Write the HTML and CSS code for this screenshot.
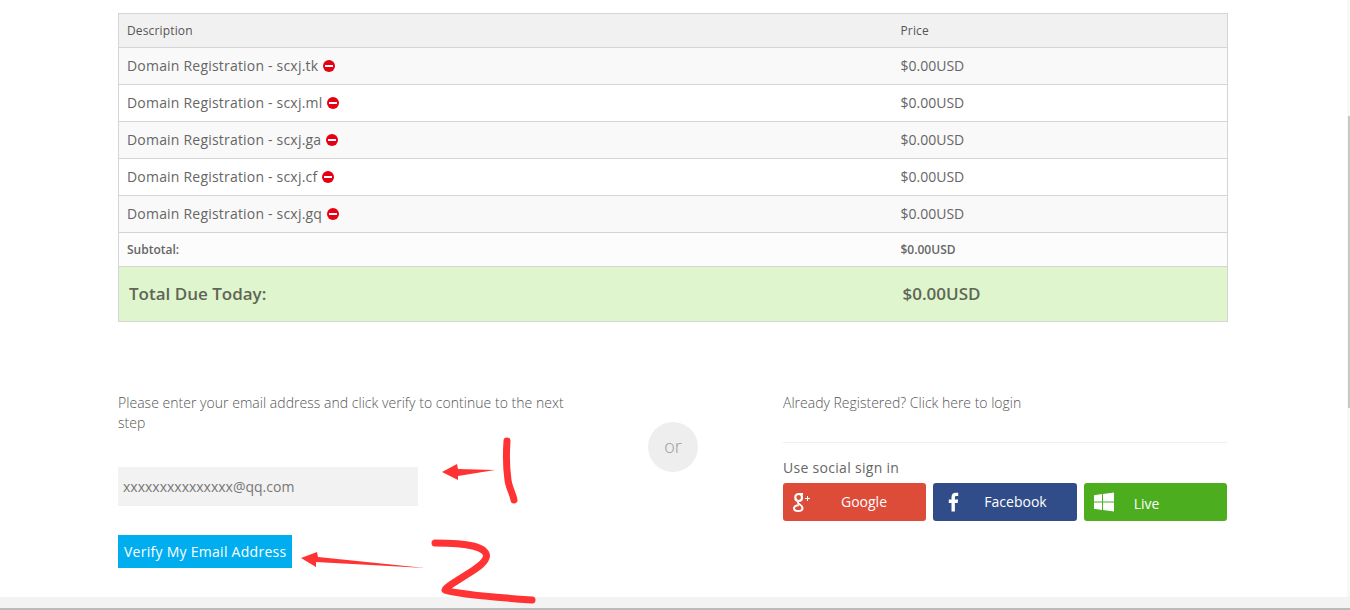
FILE: index.html
```html
<!DOCTYPE html>
<html lang="en">
<head>
    <meta charset="UTF-8">
    <meta name="viewport" content="width=device-width, initial-scale=1.0">
    <title>Checkout</title>
    <link rel="stylesheet" href="styles.css">
</head>
<body>
    <div class="page">
        <table class="cart">
            <tr class="head">
                <th class="col-desc">Description</th>
                <th>Price</th>
            </tr>
            <tr class="item odd">
                <td>Domain Registration - scxj.tk <span class="remove"></span></td>
                <td>$0.00USD</td>
            </tr>
            <tr class="item">
                <td>Domain Registration - scxj.ml <span class="remove"></span></td>
                <td>$0.00USD</td>
            </tr>
            <tr class="item odd">
                <td>Domain Registration - scxj.ga <span class="remove"></span></td>
                <td>$0.00USD</td>
            </tr>
            <tr class="item">
                <td>Domain Registration - scxj.cf <span class="remove"></span></td>
                <td>$0.00USD</td>
            </tr>
            <tr class="item odd">
                <td>Domain Registration - scxj.gq <span class="remove"></span></td>
                <td>$0.00USD</td>
            </tr>
            <tr class="subtotal">
                <td>Subtotal:</td>
                <td>$0.00USD</td>
            </tr>
            <tr class="total">
                <td>Total Due Today:</td>
                <td>$0.00USD</td>
            </tr>
        </table>

        <div class="signup">
            <div class="verify">
                <p class="hint">Please enter your email address and click verify to continue to the next step</p>
                <input class="email" type="text" value="xxxxxxxxxxxxxxx@qq.com">
                <button class="btn-verify">Verify My Email Address</button>
            </div>
            <div class="divider"><span class="or">or</span></div>
            <div class="social">
                <p class="hint login">Already Registered? Click here to login</p>
                <h4>Use social sign in</h4>
                <div class="social-btns">
                    <a class="sbtn google">
                        <svg viewBox="0 0 24 20" width="24" height="20"><path d="M10 2H6C3.800 2 2.300 3.500 2.300 5.500 2.300 7.700 3.900 9 5.800 9 7.800 9 9 7.600 9 5.600 9 3.600 7.800 2 6 2" fill="none" stroke="#fff" stroke-width="2.200"/><path d="M5.500 9C4.300 10.500 5.200 11.300 6.400 12.200 8 13.300 9.500 14.300 9.500 16 9.500 18 7.500 19 5.200 19 2.800 19 1 18 1 16.200 1 14.500 3 13.200 5.800 13.300" fill="none" stroke="#fff" stroke-width="2"/><path d="M12 6h2V4h1v2h2v1h-2v2h-1V7h-2z" fill="#fff"/></svg>
                        <span>Google</span>
                    </a>
                    <a class="sbtn facebook">
                        <svg viewBox="0 0 12 20" width="12" height="20"><path d="M3.500 19.500V11H.8V7.600h2.700V5.200C3.500 2.300 5.200.8 7.700.8c1.200 0 2.200.1 2.500.1v3H8.500c-1.400 0-1.600.6-1.600 1.600v2.100h3.200L9.700 11H6.900v8.500z" fill="#fff"/></svg>
                        <span>Facebook</span>
                    </a>
                    <a class="sbtn live">
                        <svg viewBox="0 0 20 20" width="20" height="20"><path d="M0 3.200l8-1.100v7.400H0zM9 2l11-1.600v9.100H9zM0 10.500h8v7.400l-8-1.100zM9 10.500h11v9.100L9 18z" fill="#fff"/></svg>
                        <span>Live</span>
                    </a>
                </div>
            </div>
        </div>
    </div>
    <div class="page-foot"></div>
    <div class="scroll-track"><div class="scroll-thumb"></div></div>

    <!-- red marks drawn on top of the screenshot -->
    <svg class="marks" viewBox="0 0 1350 610" width="1350" height="610">
        <path class="fill" d="M442 472L457 464L458 469L495 470L458 476L458 480Z"/>
        <path class="ink" d="M507 441C506 455 507 473 508 480C509 488 513 494 514 500"/>
        <path class="fill" d="M301 558L317 552L318 557L425 568L316 562L316 567Z"/>
        <path class="ink" d="M435 543C450 543 465 544 473 546C484 549 488 553 486 558C483 566 470 572 458 580C452 584 446 587 445 590C455 594 490 597 532 600"/>
    </svg>
</body>
</html>
```

FILE: styles.css
```css
* {
    box-sizing: border-box;
}
html, body {
    margin: 0;
    height: 610px;
    overflow: hidden;
}
body {
    background: #fff;
    color: #666;
    font-family: "Open Sans", sans-serif;
    font-size: 14px;
}
.page {
    height: 597px;
    padding: 13px 122px 0 118px;
}

/* order table */
.cart {
    width: 1110px;
    border-collapse: collapse;
    table-layout: fixed;
    border: 1px solid #d5d5d5;
}
.cart th, .cart td {
    padding: 0 8px;
    border-top: 1px solid #d5d5d5;
    text-align: left;
    font-weight: 400;
}
.col-desc {
    width: 774px;
}
.cart tr.head {
    height: 34px;
    background: #f1f1f1;
}
.cart .head th {
    font-size: 12px;
    color: #555;
    letter-spacing: .15px;
}
.cart tr.item {
    height: 37px;
}
.cart .item td {
    padding-bottom: 2px;
}
.cart .item td:first-child {
    letter-spacing: .2px;
}
.odd {
    background: #f9f9f9;
}
.remove {
    display: inline-block;
    position: relative;
    width: 12px;
    height: 12px;
    margin-left: 1px;
    border-radius: 50%;
    background: #e60012;
    vertical-align: -1px;
}
.remove::after {
    content: "";
    position: absolute;
    left: 2px;
    right: 2px;
    top: 5px;
    height: 2px;
    background: #fff;
}
.cart tr.subtotal {
    height: 34px;
    background: #fcfcfc;
}
.cart .subtotal td {
    font-size: 12px;
    font-weight: 600;
}
.cart tr.total {
    height: 55px;
    background: #dff5cd;
}
.cart .total td {
    padding: 0 8px 2px 10px;
    font-size: 17px;
    font-weight: 600;
    color: #5f6657;
}

/* verify + social */
.signup {
    display: grid;
    grid-template-columns: 445px 220px 444px;
    margin-top: 71px;
}
.hint {
    margin: 0;
    font-weight: 300;
    line-height: 20px;
    color: #555;
}
.verify .hint {
    margin-right: -15px;
    letter-spacing: .03px;
}
.email {
    display: block;
    width: 300px;
    height: 39px;
    margin-top: 34px;
    padding: 0 5px;
    border: 0;
    background: #f2f2f2;
    color: #777;
    font-family: "Open Sans", sans-serif;
    font-size: 14px;
}
.btn-verify {
    display: block;
    height: 33px;
    margin-top: 29px;
    padding: 0 6px;
    border: 0;
    background: #00aeef;
    color: #fff;
    font-family: "Open Sans", sans-serif;
    font-size: 14px;
    letter-spacing: .27px;
}
.divider {
    display: flex;
    justify-content: center;
    padding-top: 29px;
}
.or {
    width: 50px;
    height: 50px;
    border-radius: 50%;
    background: #eee;
    color: #999;
    font-size: 18px;
    font-weight: 300;
    line-height: 48px;
    text-align: center;
}
.login {
    padding-bottom: 29px;
    border-bottom: 1px solid #eee;
}
.social h4 {
    margin: 15px 0 5px;
    font-size: 14px;
    font-weight: 400;
    line-height: 20px;
    color: #666;
    letter-spacing: .3px;
}
.social-btns {
    display: grid;
    grid-template-columns: 143px 144px 143px;
    gap: 7px;
}
.sbtn {
    display: flex;
    align-items: center;
    height: 38px;
    padding-left: 10px;
    border-radius: 3px;
    color: #fff;
    font-size: 14px;
}
.sbtn span {
    flex: 1;
    padding-bottom: 2px;
    text-align: center;
}
.google {
    background: #dd4b39;
}
.google span {
    padding-right: 15px;
}
.facebook {
    background: #304d89;
    padding-left: 15px;
}
.facebook span {
    padding-right: 6px;
}
.live {
    background: #4cae1e;
}
.live span {
    padding: 3px 48px 0 0;
}

/* bottom strip */
.page-foot {
    height: 13px;
    background: #f3f3f3;
    border-bottom: 2px solid #bbb;
}
.scroll-track {
    position: absolute;
    right: 0;
    top: 0;
    width: 3px;
    height: 597px;
    background: #f8f8f8;
}
.scroll-thumb {
    margin: 116px 0 0 1px;
    width: 2px;
    height: 292px;
    background: #c8c8c8;
}
.marks {
    position: absolute;
    left: 0;
    top: 0;
    pointer-events: none;
}
.marks .fill {
    fill: #f33;
}
.marks .ink {
    fill: none;
    stroke: #f33;
    stroke-width: 7;
    stroke-linecap: round;
    stroke-linejoin: round;
}
```
